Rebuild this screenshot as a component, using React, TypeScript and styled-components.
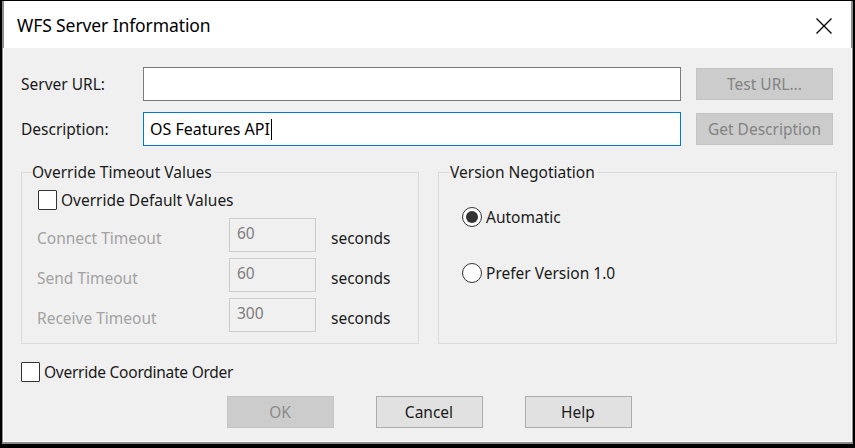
import React from 'react';
import styled, { createGlobalStyle } from 'styled-components';

const GlobalStyle = createGlobalStyle`
  html, body {
    margin: 0;
    padding: 0;
    background: #000;
  }
  body {
    font-family: 'Noto Sans', 'Open Sans', sans-serif;
  }
`;

const Screen = styled.div`
  width: 855px;
  height: 448px;
  box-sizing: border-box;
  background: #000;
  padding: 1px 2px 4px 2px;
`;

const Window = styled.div`
  height: 100%;
  box-sizing: border-box;
  display: flex;
  flex-direction: column;
  border: 2px solid #8c8c8c;
  border-top: none;
  background: #f0f0f0;
`;

const TitleBar = styled.div`
  height: 47px;
  flex: none;
  display: flex;
  align-items: center;
  justify-content: space-between;
  padding: 0 18px 0 13px;
  background: #fff;
`;

const Title = styled.span`
  font-size: 17.5px;
  color: #000;
  letter-spacing: -0.1px;
`;

const CloseButton = styled.div`
  width: 18px;
  height: 18px;
  display: flex;
  margin-top: 3px;
`;

const Body = styled.div`
  flex: 1;
  display: flex;
  flex-direction: column;
  padding: 19px 18px 0 17px;
  border-left: 1px solid #fff;
  border-right: 1px solid #fff;
  border-bottom: 1px solid #fff;
  margin-left: -1px;
  margin-right: -1px;
`;

const FieldRow = styled.div<{ $gap?: number }>`
  display: flex;
  align-items: center;
  margin-top: ${(p) => p.$gap ?? 0}px;
`;

const Label = styled.span<{ $width?: number; $muted?: boolean }>`
  width: ${(p) => (p.$width ? `${p.$width}px` : 'auto')};
  flex: none;
  font-size: 15.5px;
  color: ${(p) => (p.$muted ? '#a2a2a2' : '#1a1a1a')};
`;

const TimeoutLabel = styled(Label)`
  margin-top: 6px;
`;

const TextBox = styled.div<{ $focused?: boolean }>`
  width: 538px;
  height: 34px;
  box-sizing: border-box;
  background: #fff;
  border: 1px solid ${(p) => (p.$focused ? '#0078d7' : '#7a7a7a')};
  display: flex;
  align-items: center;
  padding-left: 6px;
  font-size: 16px;
  color: #000;
`;

const Caret = styled.span`
  display: inline-block;
  width: 1px;
  height: 21px;
  background: #000;
  margin-left: 1px;
`;

const SideButton = styled.div`
  width: 137px;
  height: 32px;
  box-sizing: border-box;
  margin-left: 15px;
  background: #cccccc;
  border: 1px solid #c4c4c4;
  display: flex;
  align-items: center;
  justify-content: center;
  font-size: 15.5px;
  color: #838383;
`;

const GroupRow = styled.div`
  display: flex;
  gap: 19px;
  margin-top: 16px;
  margin-right: -4px;
`;

const Group = styled.fieldset<{ $width: number }>`
  width: ${(p) => p.$width}px;
  height: 182px;
  box-sizing: border-box;
  margin: 0;
  padding: 0;
  border: 1px solid #dadada;
  display: flex;
  flex-direction: column;
`;

const Legend = styled.legend<{ $indent: number }>`
  margin-left: ${(p) => p.$indent}px;
  padding: 0 2px 0 0;
  font-size: 15.5px;
  line-height: 20px;
  color: #1a1a1a;
`;

const CheckRow = styled.label<{ $indent?: number; $top?: number; $tight?: boolean }>`
  display: flex;
  align-items: center;
  gap: 4px;
  margin-left: ${(p) => p.$indent ?? 0}px;
  margin-top: ${(p) => p.$top ?? 0}px;
  font-size: 15.5px;
  letter-spacing: ${(p) => (p.$tight ? '-0.25px' : '0')};
  color: #1a1a1a;
`;

const CheckBox = styled.span`
  width: 19px;
  height: 20px;
  box-sizing: border-box;
  background: #fff;
  border: 1px solid #333;
  border-radius: 1px;
  flex: none;
`;

const TimeoutList = styled.div`
  display: flex;
  flex-direction: column;
  gap: 6px;
  margin: 7px 0 0 15px;
`;

const TimeoutRow = styled.div`
  display: flex;
  align-items: center;
`;

const NumberBox = styled.div`
  width: 87px;
  height: 34px;
  box-sizing: border-box;
  border: 1px solid #cccccc;
  background: #f0f0f0;
  padding: 3px 0 0 7px;
  font-size: 15.5px;
  color: #7d7d7d;
`;

const Unit = styled.span`
  margin-left: 15px;
  margin-top: 6px;
  font-size: 15.5px;
  color: #1a1a1a;
`;

const RadioRow = styled.div<{ $top: number }>`
  display: flex;
  align-items: center;
  gap: 4px;
  margin: ${(p) => p.$top}px 0 0 23px;
  font-size: 15.5px;
  color: #1a1a1a;
`;

const Radio = styled.span<{ $checked?: boolean }>`
  width: 20px;
  height: 20px;
  box-sizing: border-box;
  border-radius: 50%;
  border: 1px solid #333;
  background: #fff;
  flex: none;
  display: flex;
  align-items: center;
  justify-content: center;
  &::after {
    content: '';
    width: 12px;
    height: 12px;
    border-radius: 50%;
    background: #333;
    display: ${(p) => (p.$checked ? 'block' : 'none')};
  }
`;

const ButtonBar = styled.div`
  display: flex;
  justify-content: center;
  gap: 42px;
  margin-top: 13px;
  padding-left: 4px;
`;

const DialogButton = styled.div<{ $disabled?: boolean }>`
  width: 107px;
  height: 32px;
  box-sizing: border-box;
  display: flex;
  align-items: center;
  justify-content: center;
  background: ${(p) => (p.$disabled ? '#cccccc' : '#e1e1e1')};
  border: 1px solid ${(p) => (p.$disabled ? '#c4c4c4' : '#adadad')};
  font-size: 15.5px;
  color: ${(p) => (p.$disabled ? '#8a8a8a' : '#1a1a1a')};
`;

const timeouts = [
  { label: 'Connect Timeout', value: '60' },
  { label: 'Send Timeout', value: '60' },
  { label: 'Receive Timeout', value: '300' },
];

export default function App() {
  return (
    <>
      <GlobalStyle />
      <Screen>
        <Window>
          <TitleBar>
            <Title>WFS Server Information</Title>
            <CloseButton>
              <svg width="18" height="18" viewBox="0 0 18 18">
                <path d="M1.5 1.5 L16.5 16.5 M16.5 1.5 L1.5 16.5" stroke="#000" strokeWidth="1.4" />
              </svg>
            </CloseButton>
          </TitleBar>
          <Body>
            <FieldRow>
              <Label $width={122}>Server URL:</Label>
              <TextBox />
              <SideButton>Test URL...</SideButton>
            </FieldRow>
            <FieldRow $gap={11}>
              <Label $width={122}>Description:</Label>
              <TextBox $focused>
                OS Features API
                <Caret />
              </TextBox>
              <SideButton>Get Description</SideButton>
            </FieldRow>

            <GroupRow>
              <Group $width={399}>
                <Legend $indent={10}>Override Timeout Values</Legend>
                <CheckRow $indent={16} $top={7}>
                  <CheckBox />
                  Override Default Values
                </CheckRow>
                <TimeoutList>
                  {timeouts.map((t) => (
                    <TimeoutRow key={t.label}>
                      <TimeoutLabel $width={192} $muted>
                        {t.label}
                      </TimeoutLabel>
                      <NumberBox>{t.value}</NumberBox>
                      <Unit>seconds</Unit>
                    </TimeoutRow>
                  ))}
                </TimeoutList>
              </Group>
              <Group $width={400}>
                <Legend $indent={11}>Version Negotiation</Legend>
                <RadioRow $top={24}>
                  <Radio $checked />
                  Automatic
                </RadioRow>
                <RadioRow $top={34}>
                  <Radio />
                  Prefer Version 1.0
                </RadioRow>
              </Group>
            </GroupRow>

            <CheckRow $top={17} $tight>
              <CheckBox />
              Override Coordinate Order
            </CheckRow>

            <ButtonBar>
              <DialogButton $disabled>OK</DialogButton>
              <DialogButton>Cancel</DialogButton>
              <DialogButton>Help</DialogButton>
            </ButtonBar>
          </Body>
        </Window>
      </Screen>
    </>
  );
}
